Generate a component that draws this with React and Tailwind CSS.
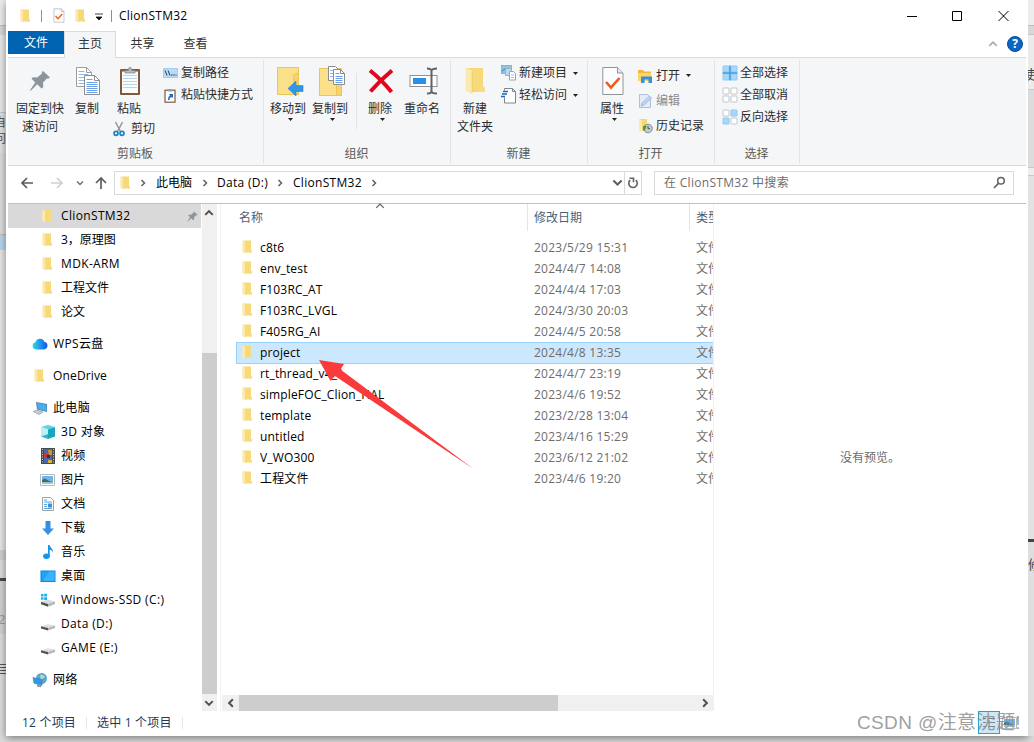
const quickAccess = ["ClionSTM32", "3，原理图", "MDK-ARM", "工程文件", "论文"];

const files = [
  { name: "c8t6", date: "2023/5/29 15:31" },
  { name: "env_test", date: "2024/4/7 14:08" },
  { name: "F103RC_AT", date: "2024/4/4 17:03" },
  { name: "F103RC_LVGL", date: "2024/3/30 20:03" },
  { name: "F405RG_AI", date: "2024/4/5 20:58" },
  { name: "project", date: "2024/4/8 13:35", selected: true },
  { name: "rt_thread_v4_1", date: "2024/4/7 23:19" },
  { name: "simpleFOC_Clion_HAL", date: "2023/4/6 19:52" },
  { name: "template", date: "2023/2/28 13:04" },
  { name: "untitled", date: "2023/4/16 15:29" },
  { name: "V_WO300", date: "2023/6/12 21:02" },
  { name: "工程文件", date: "2023/4/6 19:20" },
];

/* ---------- icons ---------- */

function FolderIcon({ className = "w-[10px] h-[14px]" }) {
  return (
    <svg viewBox="0 0 10 14" preserveAspectRatio="none" className={className}>
      <path d="M1 .5h8v9.300l1 .4v2.300H3z" fill="#f8d978" />
      <path d="M8 9.500l2 .8v2.200H7z" fill="#f9dc84" />
      <path d="M.3.5l3.200 1.300v11.700L.3 12z" fill="#fce9ae" />
      <path d="M3.600 1.800v11.200" stroke="#eccb6c" strokeWidth=".4" />
    </svg>
  );
}

function PinIcon({ className = "w-[22px] h-[22px]", color = "#8b959d" }) {
  return (
    <svg viewBox="0 0 22 22" className={className} fill={color}>
      <path d="M14 1l7 6.500-2 1.300-1.300-.3-3.700 4.300.3 4.200-1.800 1.500-4.300-4.200L1.800 20.800l-.8-.6 5.200-7.700L2.500 8.800 4 7.300l4.200.2 4.800-4-.2-1.500z" />
    </svg>
  );
}

function CopyIcon() {
  return (
    <svg viewBox="0 0 26 30" className="w-[26px] h-[30px] ml-[2px]" strokeWidth="1">
      <path d="M1.500 1.500h10l5 5v14h-15z" fill="#fff" stroke="#9c9c9c" />
      <path d="M11.500 1.500v5h5" fill="none" stroke="#9c9c9c" />
      <path d="M3.500 5.500h6M3.500 8.500h10M3.500 11.500h10M3.500 14.500h10M3.500 17.500h10" stroke="#8fb6e6" />
      <path d="M9.500 9.500h10l5 5v14h-15z" fill="#fff" stroke="#8c8c8c" />
      <path d="M19.500 9.500v5h5" fill="none" stroke="#8c8c8c" />
      <path d="M11.500 13.500h6M11.500 16.500h11M11.500 18.500h11M11.500 20.500h11M11.500 22.500h11M11.500 24.500h11M11.500 26.500h11" stroke="#6c9fe6" />
    </svg>
  );
}

function PasteIcon() {
  return (
    <svg viewBox="0 0 22 30" className="w-[22px] h-[30px] ml-[2px]">
      <rect x="1" y="3" width="20" height="26" rx="1" fill="#80593e" />
      <rect x="3" y="5.500" width="16" height="21.500" fill="#fbfcfd" />
      <path d="M4 9.500h14M4 12.500h14M4 15.500h14M4 18.500h14M4 21.500h14" stroke="#b4d3ec" />
      <path d="M6 7V4.500h3.500C9.500 0 12.500 0 12.500 4.500H16V7z" fill="#b5babd" stroke="#84898d" strokeWidth=".8" />
    </svg>
  );
}

function ScissorsIcon() {
  return (
    <svg viewBox="0 0 12 16" className="w-3 h-4" fill="none">
      <path d="M2.500 1l5 9.500M9.500 1l-5 9.500" stroke="#90989e" strokeWidth="1.500" />
      <circle cx="3" cy="12.300" r="2" stroke="#1c86c8" strokeWidth="1.700" />
      <circle cx="9" cy="12.300" r="2" stroke="#1c86c8" strokeWidth="1.700" />
    </svg>
  );
}

function PathIcon() {
  return (
    <svg viewBox="0 0 15 10" className="w-[15px] h-[10px]">
      <rect width="15" height="10" fill="#a4cdee" />
      <path d="M1 1h13v8H1z" fill="#b9dbf4" />
      <path d="M2 2.500l2 5M5 2.500l2 5" stroke="#1d3f66" strokeWidth="1" />
      <path d="M8 7h1.500M10.300 7h1.500M12.500 7h1" stroke="#1d3f66" strokeWidth="1" />
    </svg>
  );
}

function ShortcutIcon() {
  return (
    <svg viewBox="0 0 12 15" className="w-3 h-[15px] ml-[0.5px]">
      <rect x="1" y="2.200" width="10" height="12" fill="#fff" stroke="#7b5a45" strokeWidth="1.200" />
      <path d="M3.500 3.500V1h5v2.500z" fill="#9aa0a4" />
      <path d="M4 12c0-2.500.5-3.500 2-4.500L5 6h4v4L7.500 9c-1.500.5-2 1.200-2 3z" fill="#2569b8" />
    </svg>
  );
}

function MoveToIcon() {
  return (
    <svg viewBox="0 0 28 30" className="w-7 h-[30px] ml-[4px]">
      <path d="M1.500 1.500h21v27h-21z" fill="#fbe08a" stroke="#ecc55a" />
      <path d="M17.500 28V9l3-1.500h2V28.500h-5z" fill="#f6d36e" stroke="#ecc55a" />
      <path d="M12 22.500l8-7.500v4.500h7v6h-7V30z" fill="#2f96e8" stroke="#2680c8" strokeWidth=".6" />
    </svg>
  );
}

function CopyToIcon() {
  return (
    <svg viewBox="0 0 28 32" className="w-7 h-8 ml-[4px]">
      <path d="M1.500 3.500h22v27h-22z" fill="#fbe08a" stroke="#ecc55a" />
      <path d="M18.500 30V12h5V30.500h-5z" fill="#f6d36e" stroke="#ecc55a" />
      <path d="M10.500 1.500h7l3 3v11h-10z" fill="#fff" stroke="#8c8c8c" />
      <path d="M12 5.500h6M12 8.500h6M12 11.500h6" stroke="#8fb6e6" />
      <path d="M15.500 4.500h7l4 4v11h-11z" fill="#fff" stroke="#8c8c8c" />
      <path d="M22.500 4.500v4h4" fill="none" stroke="#8c8c8c" />
      <path d="M17.500 8.500h4M17.500 11.500h7M17.500 13.500h7M17.500 15.500h7M17.500 17.500h7" stroke="#6c9fe6" />
    </svg>
  );
}

function DeleteIcon() {
  return (
    <svg viewBox="0 0 26 26" className="w-[26px] h-[26px] ml-[2px]">
      <path d="M2 2.500C9 8 17 16 23.500 24M24 2.500C16 9 9 16 2.500 23.500" stroke="#e1061b" strokeWidth="4" fill="none" />
    </svg>
  );
}

function RenameIcon() {
  return (
    <svg viewBox="0 0 29 28" className="w-[29px] h-7 ml-[2px]" fill="none">
      <rect x="1" y="8.500" width="27" height="11" fill="#fff" stroke="#8b9298" />
      <rect x="4" y="11" width="13" height="6" fill="#2790e6" />
      <path d="M18 1.500c3 0 4.500.8 4.500 2.500v20c0 1.700-1.500 2.500-4.500 2.500M28 1.500c-3 0-5.500.8-5.500 2.500M28 26.500c-3 0-5.500-.8-5.500-2.500" stroke="#5f6468" strokeWidth="2" />
    </svg>
  );
}

function NewItemIcon() {
  return (
    <svg viewBox="0 0 16 16" className="w-4 h-4">
      <rect x=".5" y=".5" width="10" height="8" fill="#8cc3e6" stroke="#a3adb4" />
      <path d="M1 6l3-2 4 3" stroke="#3f8c7c" fill="none" />
      <path d="M4.500 3.500h6v7h-6z" fill="#b8daee" stroke="#a3adb4" />
      <path d="M8.500 6.500h4l2 2v6.500h-6z" fill="#fff" stroke="#9aa4ab" />
      <path d="M10 10h3M10 12.500h3" stroke="#9fbfdd" />
    </svg>
  );
}

function EasyAccessIcon() {
  return (
    <svg viewBox="0 0 16 17" className="w-4 h-[17px]">
      <path d="M3.500 1.500h8l3 3v11.500h-11z" fill="#fff" stroke="#7f868b" />
      <path d="M11.500 1.500v3h3" fill="none" stroke="#7f868b" />
      <path d="M2.500 3.500h6v7h-6z" fill="#fff" />
      <path d="M2 4.500h5M1 7h5M0 9.500h4" stroke="#1d68b4" strokeWidth="1.300" />
    </svg>
  );
}

function PropertiesIcon({ className = "w-[22px] h-[30px] ml-px" }) {
  return (
    <svg viewBox="0 0 22 30" className={className}>
      <path d="M.8 1.500h14.700l5.500 5.500v21.500H.8z" fill="#fdfdfd" stroke="#8f959a" />
      <path d="M15.500 1.500v5.500h5.500" fill="#e6e8ea" stroke="#8f959a" />
      <path d="M4 16l5 5.500 8.500-9.500" fill="none" stroke="#ee5a1c" strokeWidth="2.600" />
    </svg>
  );
}

function OpenIcon() {
  return (
    <svg viewBox="0 0 16 14" className="w-4 h-[14px]">
      <path d="M0 1h5l1.500 1.500H13V12H0z" fill="#f0b73c" />
      <path d="M0 4h13v8H0z" fill="#fbd565" />
      <path d="M3 14V7.500h11V14h-3.500v-3.500h-4V14z" fill="#3a8fd8" />
    </svg>
  );
}

function EditIcon() {
  return (
    <svg viewBox="0 0 14 16" className="w-[14px] h-4">
      <path d="M1.500 1.500h8l3 3v10h-11z" fill="#e4ecf8" stroke="#afbfd8" />
      <path d="M3 13l1-3 7.500-7 2 2L6 12z" fill="#c5d4ee" stroke="#9bb2d8" strokeWidth=".8" />
    </svg>
  );
}

function HistoryIcon() {
  return (
    <svg viewBox="0 0 15 16" className="w-[15px] h-4">
      <path d="M1 1h8v12H1z" fill="#f7d674" />
      <path d="M1 1l3 1.200v12L1 13z" fill="#fce9ae" />
      <circle cx="10" cy="10.500" r="4.300" fill="#c6cbcf" stroke="#82898e" />
      <path d="M10 8v2.700h2" fill="none" stroke="#50565a" />
      <path d="M5 8.500c1.500-1.500 2.500-1.500 3.500 0L6.500 13 5 12z" fill="#3f9f45" />
    </svg>
  );
}

function SelectIcon({ cells }) {
  const all = cells.every(Boolean);
  return (
    <svg viewBox="0 0 16 16" className="w-4 h-4">
      {cells.map((on, i) => (
        <rect
          key={i}
          x={i % 2 ? 9 : 1}
          y={i > 1 ? 9 : 1}
          width="6"
          height="6"
          rx=".5"
          fill={on ? "#a6d8fb" : "#fff"}
          stroke={on ? "#8cc9f4" : "#c3c6c9"}
        />
      ))}
      {all && <path d="M8 .5v15M.5 8h15" stroke="#3a97dc" strokeWidth="1.500" />}
    </svg>
  );
}

function Chevron({ dir = "down", className = "w-2 h-2", color = "#606060", width = 1.500 }) {
  const d = {
    down: "M1 2.500l3 3 3-3",
    up: "M1 5.500l3-3 3 3",
    right: "M2.500 1l3 3-3 3",
    left: "M5.500 1l-3 3 3 3",
  }[dir];
  return (
    <svg viewBox="0 0 8 8" className={className} fill="none" stroke={color} strokeWidth={width}>
      <path d={d} />
    </svg>
  );
}

function Caret() {
  return (
    <svg viewBox="0 0 5 3" className="w-[5px] h-[3px] shrink-0">
      <path d="M0 0h5L2.500 3z" fill="#222" />
    </svg>
  );
}

function NavArrow({ dir = "left", color = "#5d5d5d" }) {
  const d = {
    left: "M13 7H2M7 2L2 7l5 5",
    right: "M1 7h11M7 2l5 5-5 5",
    up: "M7 13V2M2 7l5-5 5 5",
  }[dir];
  return (
    <svg viewBox="0 0 14 14" className="w-[14px] h-[14px] shrink-0" fill="none" stroke={color} strokeWidth="1.700">
      <path d={d} />
    </svg>
  );
}

const treeIcons = {
  cloud: (
    <>
      <defs>
        <linearGradient id="cloud" x1="0" x2="1">
          <stop offset="0" stopColor="#2fe0d0" />
          <stop offset=".45" stopColor="#1f9df5" />
          <stop offset="1" stopColor="#1355e0" />
        </linearGradient>
      </defs>
      <path d="M4 13.500a3.700 3.700 0 01-.5-7.300 4.600 4.600 0 018.800-.4A3.900 3.900 0 0112 13.500z" fill="url(#cloud)" />
    </>
  ),
  pc: (
    <>
      <path d="M4 2l11 2v8L5 9.500z" fill="#5d7f9b" />
      <path d="M5 3l9.300 1.800v6.400L5.800 8.800z" fill="#44b0f4" />
      <path d="M1 11.500l4-1.500 6 2-4 2.500z" fill="#c4ccd2" stroke="#8c979f" strokeWidth=".6" />
    </>
  ),
  cube: (
    <>
      <path d="M1 3l7-2 7 2-7 2.500z" fill="#5fd3e0" />
      <path d="M1 3l7 2.500V15l-7-2.500z" fill="#bdf0f5" />
      <path d="M15 3L8 5.500V15l7-2.500z" fill="#19a5be" />
      <path d="M1 12.500L8 10v5z" fill="#29b8ce" />
    </>
  ),
  video: (
    <>
      <path d="M1 0h14v16H1z" fill="#4a4a4c" />
      <path d="M4 1h8v14H4z" fill="#4567b4" />
      <path d="M4 6h5v3H4z" fill="#c8372c" />
      <path d="M8 2h4v5H9z" fill="#c89b28" />
      <path d="M7 7h3v3H7z" fill="#3a3226" />
      <path d="M8 12h4v3H8z" fill="#d5b432" />
      <path d="M2.500 1v14M13.500 1v14" stroke="#cfcfcf" strokeWidth="1" strokeDasharray="1 1.500" />
    </>
  ),
  picture: (
    <>
      <path d="M.5 2.500h14v11H.5z" fill="#fff" stroke="#b4babf" />
      <path d="M2 4h11v5H2z" fill="#70b4ea" />
      <path d="M2 8l3-1.500L9 9l4 .5V10.500H2z" fill="#3b6f62" />
      <path d="M2 10.500h11V12H2z" fill="#9cc7de" />
    </>
  ),
  doc: (
    <>
      <path d="M2.500 1.500h8l3 3v10h-11z" fill="#fff" stroke="#9da4a9" />
      <path d="M4 4h3M4 6h8M4 8.500h3M4 10.500h3M4 12.500h8" stroke="#5aa4dc" />
      <path d="M8 7.500h4v4H8z" fill="#3f8fd0" />
    </>
  ),
  download: <path d="M5.500 1h5v7.500H14L8 15 2 8.500h3.500z" fill="#3390e4" />,
  music: (
    <>
      <path d="M8 1h1.700c.3 2.500 3.800 3.500 3.300 8-.5-2.200-2-3-3.300-3.200v6H8z" fill="#1496ee" />
      <ellipse cx="6.500" cy="12.200" rx="3.400" ry="2.700" fill="#1496ee" />
    </>
  ),
  desktop: (
    <>
      <path d="M.5 2.500h15v11.500H.5z" fill="#1382d8" />
      <path d="M1.500 3.500h13v9.500h-13z" fill="#1fa3fa" />
      <path d="M9 3.500h5.500v9.500H3z" fill="#3bb2fd" />
    </>
  ),
  windrive: (
    <>
      <path d="M1 2h2.500v2.500H1zM4.200 1.700H7v2.800H4.200zM1 5.200h2.500v2.500H1zM4.200 5.200H7V8H4.200z" fill="#16b5ee" />
      <path d="M1 9.700L8 7.700l7 1.800-7 2.500z" fill="#d8dadb" />
      <path d="M1 9.700L8 12v2.800l-7-2.500z" fill="#505554" />
      <path d="M8 12l7-2.500V12l-7 2.800z" fill="#b2b6b8" />
    </>
  ),
  drive: (
    <>
      <path d="M1 10.200l7-2 7 1.300-7 2.500z" fill="#dddfe0" />
      <path d="M1 10.200L8 12v2.500l-7-2z" fill="#505554" />
      <path d="M8 12l7-2.500V12l-7 2.500z" fill="#b2b6b8" />
    </>
  ),
  network: (
    <>
      <circle cx="9.500" cy="6.500" r="5.500" fill="#5fa5cb" />
      <path d="M8 2.500c2 1 4 .5 5 2-1.500 2-3 2-4 4z" fill="#b6d9dc" />
      <path d="M1 5.500l9 2.200v5.800l-8-2.300z" fill="#2d9ae8" stroke="#3f79a0" strokeWidth=".6" />
      <path d="M5 13.500l4 1" stroke="#7b868e" strokeWidth="1.500" />
    </>
  ),
};

/* ---------- ribbon ---------- */

function BigButton({ icon, lines, width, caret }) {
  return (
    <div className={`flex flex-col items-center shrink-0 ${width}`}>
      <div className="mt-[5px] mb-px h-9 flex items-center">{icon}</div>
      {lines.map((l) => (
        <span key={l} className="leading-[18px] whitespace-nowrap">{l}</span>
      ))}
      {caret && <span className="ml-[4px] flex"><Caret /></span>}
    </div>
  );
}

function SmallButton({ icon, label, caret, muted, height = "h-[22px]" }) {
  return (
    <div className={`flex items-center ${height} ${muted ? "text-[#8b8b8b]" : ""}`}>
      <span className="w-[18px] shrink-0 flex items-center">{icon}</span>
      <span className="whitespace-nowrap leading-[18px]">{label}</span>
      {caret && <span className="ml-[6px] flex"><Caret /></span>}
    </div>
  );
}

function Group({ label, width, children }) {
  return (
    <div className={`flex shrink-0 ${width}`}>
      <div className="flex-1 flex flex-col">
        <div className="flex flex-1">{children}</div>
        <div className="h-[21px] text-center leading-[20px] text-[#5a5a5a] pr-px">{label}</div>
      </div>
      <div className="w-px my-[2px] bg-[#e2e3e4]" />
    </div>
  );
}

function Ribbon() {
  return (
    <div className="h-[109px] mx-[2px] flex bg-[#f5f6f7] border-t border-b border-[#dadbdc] text-[#2b2b2b]">
      <Group label="剪贴板" width="w-[256px]">
        <BigButton width="w-[64px]" icon={<PinIcon />} lines={["固定到快", "速访问"]} />
        <BigButton width="w-[30px]" icon={<CopyIcon />} lines={["复制"]} />
        <div className="w-[53px] flex flex-col ml-[4px]">
          <BigButton width="w-[46px]" icon={<PasteIcon />} lines={["粘贴"]} />
          <div className="pl-[7px]"><SmallButton icon={<ScissorsIcon />} label="剪切" /></div>
        </div>
        <div className="ml-[4px] pt-[4px]">
          <SmallButton icon={<PathIcon />} label="复制路径" />
          <SmallButton icon={<ShortcutIcon />} label="粘贴快捷方式" />
        </div>
      </Group>
      <Group label="组织" width="w-[187px]">
        <div className="w-[3px]" />
        <BigButton width="w-[42px]" icon={<MoveToIcon />} lines={["移动到"]} caret />
        <BigButton width="w-[42px]" icon={<CopyToIcon />} lines={["复制到"]} caret />
        <div className="w-px h-[56px] mt-[15px] ml-[5px] mr-[4px] bg-[#e2e3e4]" />
        <BigButton width="w-[38px]" icon={<DeleteIcon />} lines={["删除"]} caret />
        <BigButton width="w-[46px]" icon={<RenameIcon />} lines={["重命名"]} />
      </Group>
      <Group label="新建" width="w-[137px]">
        <BigButton width="w-[48px]" icon={<FolderIcon className="w-5 h-7" />} lines={["新建", "文件夹"]} />
        <div className="pt-[4px] ml-[2px]">
          <SmallButton icon={<NewItemIcon />} label="新建项目" caret />
          <SmallButton icon={<EasyAccessIcon />} label="轻松访问" caret />
        </div>
      </Group>
      <Group label="打开" width="w-[127px]">
        <BigButton width="w-[48px]" icon={<PropertiesIcon />} lines={["属性"]} caret />
        <div className="pt-[5px] ml-[2px]">
          <SmallButton height="h-[25px]" icon={<OpenIcon />} label="打开" caret />
          <SmallButton height="h-[25px]" icon={<EditIcon />} label="编辑" muted />
          <SmallButton height="h-[25px]" icon={<HistoryIcon />} label="历史记录" />
        </div>
      </Group>
      <Group label="选择" width="w-[85px]">
        <div className="pt-[4px] ml-[7px]">
          <SmallButton icon={<SelectIcon cells={[1, 1, 1, 1]} />} label="全部选择" />
          <SmallButton icon={<SelectIcon cells={[0, 0, 0, 0]} />} label="全部取消" />
          <SmallButton icon={<SelectIcon cells={[0, 1, 1, 0]} />} label="反向选择" />
        </div>
      </Group>
    </div>
  );
}

/* ---------- window parts ---------- */

function TitleBar() {
  return (
    <div className="h-[31px] flex items-center pl-[14px] text-black">
      <FolderIcon />
      <div className="w-px h-3 bg-[#909090] ml-[11px] mr-[11px]" />
      <PropertiesIcon className="w-3 h-[15px]" />
      <div className="w-[10px]" />
      <FolderIcon />
      <svg viewBox="0 0 8 8" className="w-2 h-2 ml-[10px] mt-[2px]">
        <path d="M0 1h8M1 4h6L4 7z" stroke="#111" fill="#111" strokeWidth=".8" />
      </svg>
      <div className="w-px h-3 bg-[#909090] ml-[8px] mr-[7px]" />
      <span className="tracking-[0.25px]">ClionSTM32</span>
      <svg viewBox="0 0 102 12" className="w-[102px] h-3 ml-auto mr-[19px]" fill="none" stroke="#000">
        <path d="M0 6.500h10M45.500 1.500h9v9h-9zM91.500 1l10 10M101.500 1l-10 10" />
      </svg>
    </div>
  );
}

function TabBar() {
  return (
    <div className="h-[26px] flex mx-[2px] text-[#333]">
      <div className="w-14 h-[23px] bg-[#0063b1] text-white flex items-center justify-center">文件</div>
      <div className="w-[52px] h-[27px] relative bg-[#f5f6f7] border border-b-0 border-[#dadbdc] flex items-center justify-center pb-[2px]">主页</div>
      <div className="w-[53px] h-[26px] flex items-center justify-center">共享</div>
      <div className="w-[53px] h-[26px] flex items-center justify-center">查看</div>
      <div className="ml-auto flex items-center pr-[3px] gap-[9px]">
        <Chevron dir="up" className="w-[10px] h-[10px]" color="#a8a8a8" width={1.200} />
        <span className="w-4 h-4 rounded-full bg-[#0a66c4] border border-[#0b4f94] text-white font-bold text-[12px] leading-[14px] text-center">?</span>
      </div>
    </div>
  );
}

function AddressBar() {
  return (
    <div className="h-[37px] flex items-center pl-[14px] pr-[14px] pb-[4px]">
      <NavArrow />
      <div className="w-4" />
      <NavArrow dir="right" color="#cfcfcf" />
      <Chevron className="w-2 h-2 ml-[12px] mr-[10px]" color="#707070" />
      <NavArrow dir="up" />
      <div className="ml-[6px] w-[528px] h-6 border border-[#d9d9d9] flex items-center pl-[5px] text-black shrink-0">
        <FolderIcon />
        <Chevron dir="right" className="w-2 h-2 ml-[9px] mr-[9px]" />
        <span>此电脑</span>
        <Chevron dir="right" className="w-2 h-2 ml-[9px] mr-[8px]" />
        <span className="w-[52px] tracking-[0.3px] whitespace-nowrap">Data (D:)</span>
        <Chevron dir="right" className="w-2 h-2 ml-[7px] mr-[9px]" />
        <span className="w-[69px] tracking-[0.3px] whitespace-nowrap">ClionSTM32</span>
        <Chevron dir="right" className="w-2 h-2 ml-[8px]" />
        <Chevron className="w-[11px] h-[11px] ml-auto mr-px" />
        <div className="w-[17px] h-full border-l border-[#d9d9d9] flex items-center justify-center">
          <svg viewBox="0 0 12 12" className="w-3 h-3" fill="none" stroke="#606060" strokeWidth="1.600">
            <path d="M8.800 3.200A4.200 4.200 0 113.200 3.200M2.500 1.200h4v4" />
          </svg>
        </div>
      </div>
      <div className="ml-[12px] flex-1 h-6 border border-[#d9d9d9] flex items-center pl-[9px] pr-[7px] text-[#6d6d6d]">
        <span className="tracking-[0.3px]">在 ClionSTM32 中搜索</span>
        <svg viewBox="0 0 13 13" className="w-[13px] h-[13px] ml-auto" fill="none" stroke="#606060">
          <circle cx="8" cy="4.800" r="3.300" strokeWidth="1.500" />
          <path d="M5.700 7.200L1 12" strokeWidth="1.700" />
        </svg>
      </div>
    </div>
  );
}

function TreeItem({ icon, label, root }) {
  return (
    <div className={`h-6 flex items-center ${root ? "pl-6 mt-2" : "pl-8"}`}>
      <svg viewBox="0 0 16 16" className="w-4 h-4 mr-[5px] shrink-0">{treeIcons[icon]}</svg>
      <span className="whitespace-nowrap tracking-[0.35px]">{label}</span>
    </div>
  );
}

function Sidebar() {
  return (
    <div className="w-[209px] flex text-black">
      <div className="w-[193px] mr-px">
        {quickAccess.map((name, i) => (
          <div key={name} className={`h-6 flex items-center pl-[34px] ${i === 0 ? "bg-[#d9d9d9]" : ""}`}>
            <FolderIcon className="w-[10px] h-[14px] mr-[9px]" />
            <span className={/[A-Z]/.test(name) ? "tracking-[0.35px]" : ""}>{name}</span>
            {i === 0 && <PinIcon className="w-[11px] h-[11px] ml-auto mr-[3px]" />}
          </div>
        ))}
        <TreeItem icon="cloud" label="WPS云盘" root />
        <div className="h-6 mt-2 flex items-center pl-[26px]">
          <FolderIcon className="w-[10px] h-[14px] mr-[9px]" />
          <span className="tracking-[0.15px]">OneDrive</span>
        </div>
        <TreeItem icon="pc" label="此电脑" root />
        <TreeItem icon="cube" label="3D 对象" />
        <TreeItem icon="video" label="视频" />
        <TreeItem icon="picture" label="图片" />
        <TreeItem icon="doc" label="文档" />
        <TreeItem icon="download" label="下载" />
        <TreeItem icon="music" label="音乐" />
        <TreeItem icon="desktop" label="桌面" />
        <TreeItem icon="windrive" label="Windows-SSD (C:)" />
        <TreeItem icon="drive" label="Data (D:)" />
        <TreeItem icon="drive" label="GAME (E:)" />
        <TreeItem icon="network" label="网络" root />
      </div>
      <div className="w-[15px] bg-[#f0f0f0] flex flex-col items-center">
        <div className="h-[149px] pt-[4px] mr-px"><Chevron dir="up" className="w-[10px] h-[10px]" color="#505050" width={1.600} /></div>
        <div className="w-full h-[341px] bg-[#cdcdcd]" />
        <div className="pt-[4px] mr-px"><Chevron className="w-[10px] h-[10px]" color="#505050" width={1.600} /></div>
      </div>
    </div>
  );
}

function FileList() {
  return (
    <div className="w-[493px] border-l border-[#f3f3f3] ml-[3px] flex flex-col relative">
      <div className="h-[27px] flex text-[#4c607a] leading-[27px]">
        <div className="w-[307px] pl-[18px] border-r border-[#e5e5e5]">名称</div>
        <div className="w-[162px] pl-[6px] border-r border-[#e5e5e5]">修改日期</div>
        <div className="pl-[6px] w-[23px] overflow-hidden whitespace-nowrap">类型</div>
      </div>
      <Chevron dir="up" className="absolute left-[154px] -top-[3px] w-[10px] h-[10px]" width={1} />
      <div className="mt-[6px] pl-[15px] flex-1">
        {files.map((f) => (
          <div
            key={f.name}
            className={`h-[21px] flex items-center pl-[6px] ${
              f.selected ? "bg-[#cce8ff] shadow-[inset_1px_1px_#99d1ff,0_1px_#99d1ff]" : ""
            }`}
          >
            <FolderIcon className="w-[10px] h-[14px] mr-[8px] mb-[2px]" />
            <span className="w-[274px] text-black tracking-[0.15px]">{f.name}</span>
            <span className="w-[162px] text-[#6d6d6d] tracking-[0.25px]">{f.date}</span>
            <span className="w-[17px] overflow-hidden whitespace-nowrap text-[#6d6d6d]">文件夹</span>
          </div>
        ))}
      </div>
      <div className="h-4 flex items-center bg-[#f0f0f0] ml-px">
        <div className="w-[17px] flex justify-center"><Chevron dir="left" className="w-[10px] h-[10px]" color="#505050" width={1.600} /></div>
        <div className="w-[319px] h-full bg-[#cdcdcd]" />
        <div className="ml-auto mr-[3px]"><Chevron dir="right" className="w-[10px] h-[10px]" color="#505050" width={1.600} /></div>
      </div>
      {/* annotation arrow over the list */}
      <svg viewBox="0 0 160 112" className="absolute left-[97px] top-[154px] w-[160px] h-[112px]">
        <path d="M1 2l25 4-3.500 5.500L155.500 111 17 18l-4.500 5z" fill="#fb3b3b" />
      </svg>
    </div>
  );
}

function StatusBar() {
  return (
    <div className="h-[25px] flex items-center pl-[16px] pr-[10px] pb-[2px] text-[#1e395b] relative">
      <span className="w-[64px] tracking-[0.2px]">12 个项目</span>
      <div className="w-px h-3 bg-[#e8e8e8] mr-[10px]" />
      <span className="w-[85px] tracking-[0.2px]">选中 1 个项目</span>
      <div className="w-px h-3 bg-[#e8e8e8]" />
      <div className="ml-auto w-[22px] h-[23px] bg-[#cce8f7] border border-[#26a0da] flex items-center justify-center">
        <svg viewBox="0 0 16 14" className="w-4 h-[14px]" stroke="#7a858d">
          <path d="M2 2.500h3M2 6.500h3M2 10.500h3M7 2.500h7M7 6.500h7M7 10.500h7" />
        </svg>
      </div>
      <svg viewBox="0 0 16 16" className="w-4 h-4 ml-[2px]">{treeIcons.picture}</svg>
      <div className="absolute right-[7px] top-[-1px] text-[19px] leading-[26px] tracking-[0.4px] whitespace-nowrap text-[#8f8f8fdd] font-['Liberation_Sans','Noto_Sans_CJK_SC',sans-serif]">
        CSDN @注意沈题!
      </div>
    </div>
  );
}

/* slivers of the page that stay visible behind the window */
function Behind({ side }) {
  if (side === "left") {
    return (
      <div className="w-[6px] h-[736px] overflow-hidden flex flex-col text-[13px] text-[#555]">
        <div className="h-[26px] bg-[#ededed] border-b border-[#bcbcbc]" />
        <div className="h-[9px] bg-[#d8d8d8]" />
        <div className="h-[78px] bg-[#e9e9e9] border-b border-[#c8c8c8]" />
        <div className="h-[40px] bg-[#e2e2e2] text-[12px] leading-[16px] pt-[2px] -ml-[6px]">自<br />问</div>
        <div className="h-[82px] border-b border-[#bcbcbc]" />
        <div className="h-[15px] bg-[#b9d6ee]" />
        <div className="h-[300px] bg-[#e6e6e6]" />
        <div className="h-[10px] bg-[#d0d0d0]" />
        <div className="h-[18px]" />
        <div className="h-[3px] bg-[#4a4a4a]" />
        <div className="h-[53px] bg-[#d2d2d2] leading-[76px] text-[#999] -ml-[2px]">2</div>
        <div className="h-[30px]" />
        <div className="h-[10px] bg-[repeating-linear-gradient(#555_0_1px,#e0e0e0_1px_3px)]" />
      </div>
    );
  }
  return (
    <div className="w-[6px] h-[736px] overflow-hidden flex flex-col text-[13px] text-[#444]">
      <div className="h-[26px] bg-[#ededed] border-b border-[#bcbcbc]" />
      <div className="h-[9px] bg-[#d8d8d8] border-b border-[#c4c4c4]" />
      <div className="h-[54px] bg-[#ebebeb] leading-[78px] -ml-[5px]">使用</div>
      <div className="h-[78px] bg-[#dcdcdc] border-t border-[#c8c8c8]" />
      <div className="h-[9px] bg-[#ededed] border-y border-[#c8c8c8]" />
      <div className="h-[363px] bg-[#e2e2e2]" />
      <div className="h-[3px] bg-[#444] shrink-0" />
      <div className="bg-[#dedede] flex-1 leading-[44px]">修</div>
    </div>
  );
}

export default function App() {
  return (
    <div className="w-[1034px] h-[742px] overflow-hidden bg-[#dcdcdc] flex text-[12px] font-['Open_Sans','Noto_Sans_CJK_SC',sans-serif]">
      <Behind side="left" />
      <div className="w-[1022px] h-[736px] shrink-0 bg-white flex flex-col shadow-[0_2px_8px_rgba(0,0,0,0.45)]">
        <TitleBar />
        <TabBar />
        <Ribbon />
        <AddressBar />
        <div className="mx-[2px] h-[508px] flex border-t border-[#bfbfbf]">
          <Sidebar />
          <FileList />
          <div className="flex-1 flex items-center justify-center border-l border-[#f0f0f0] text-[#6d6d6d]">没有预览。</div>
        </div>
        <StatusBar />
      </div>
      <Behind side="right" />
    </div>
  );
}
